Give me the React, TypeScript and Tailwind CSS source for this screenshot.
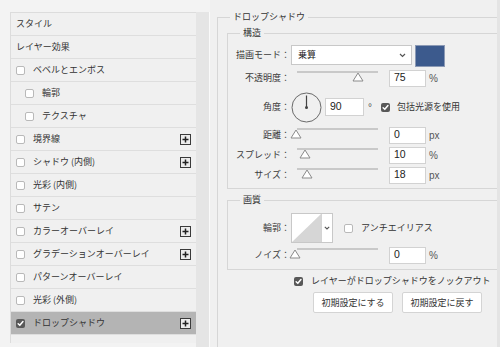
import React from "react";

const JP = "font-['Noto_Sans_CJK_JP','Noto_Sans',sans-serif]";
const NUM = "font-['Liberation_Sans','Noto_Sans_CJK_JP',sans-serif]";

function Check({ checked }: { checked?: boolean }) {
  if (checked) {
    return (
      <span className="w-[9px] h-[9px] rounded-[2px] bg-[#585858] flex items-center justify-center shrink-0">
        <svg width="7" height="7" viewBox="0 0 8 8">
          <path d="M1.3 4.2 L3.2 6.1 L6.8 1.8" stroke="white" strokeWidth="1.7" fill="none" strokeLinecap="round" strokeLinejoin="round" />
        </svg>
      </span>
    );
  }
  return <span className="block w-[9px] h-[9px] rounded-[2px] border border-[#b9b9b9] bg-white shrink-0" />;
}

function PlusBox() {
  return (
    <span className="w-[11px] h-[11px] border-[1.5px] border-[#3a3a3a] bg-[#ececec] flex items-center justify-center shrink-0">
      <svg width="7" height="7" viewBox="0 0 7 7">
        <path d="M3.5 0.5 V6.5 M0.5 3.5 H6.5" stroke="#222" strokeWidth="1.5" />
      </svg>
    </span>
  );
}

type Row = { t: string; cb?: "on" | "off"; indent?: boolean; plus?: boolean; sel?: boolean };

const rows: Row[] = [
  { t: "スタイル" },
  { t: "レイヤー効果" },
  { t: "ベベルとエンボス", cb: "off" },
  { t: "輪郭", cb: "off", indent: true },
  { t: "テクスチャ", cb: "off", indent: true },
  { t: "境界線", cb: "off", plus: true },
  { t: "シャドウ (内側)", cb: "off", plus: true },
  { t: "光彩 (内側)", cb: "off" },
  { t: "サテン", cb: "off" },
  { t: "カラーオーバーレイ", cb: "off", plus: true },
  { t: "グラデーションオーバーレイ", cb: "off", plus: true },
  { t: "パターンオーバーレイ", cb: "off" },
  { t: "光彩 (外側)", cb: "off" },
  { t: "ドロップシャドウ", cb: "on", plus: true, sel: true },
];

function Label({ children }: { children: React.ReactNode }) {
  return (
    <span className={`w-[62px] shrink-0 text-right text-[9px] text-[#3a3a3a] whitespace-nowrap ${JP}`}>{children}</span>
  );
}

function Slider({ pos }: { pos: number }) {
  return (
    <div className="relative w-[92px] h-full shrink-0">
      <div className="absolute left-[6px] top-[2px] w-[81px] h-[2px] bg-[#c9c9c9]" />
      <svg className="absolute top-[3px]" style={{ left: pos - 291 - 6 }} width="12" height="10" viewBox="0 0 12 10">
        <path d="M6 1 L11 9 L1 9 Z" fill="white" stroke="#8a8a8a" strokeWidth="1" strokeLinejoin="round" />
      </svg>
    </div>
  );
}

function NumBox({ v, w = 37, h = 17 }: { v: string; w?: number; h?: number }) {
  return (
    <span
      className={`bg-white border border-[#d2d2d2] flex items-center pl-[4px] text-[10.5px] text-[#222] shrink-0 ${NUM}`}
      style={{ width: w, height: h }}
    >
      {v}
    </span>
  );
}

function Unit({ u }: { u: string }) {
  return <span className={`ml-[3px] text-[10px] text-[#555] ${NUM}`}>{u}</span>;
}

function SliderRow({ label, pos, v, u }: { label: string; pos: number; v: string; u: string }) {
  return (
    <div className="flex items-center h-[18px]">
      <Label>{label}</Label>
      <div className="ml-[1px] h-[18px] flex items-start">
        <Slider pos={pos} />
      </div>
      <span className="ml-[6px] flex">
        <NumBox v={v} />
      </span>
      <Unit u={u} />
    </div>
  );
}

export default function App() {
  return (
    <div className={`w-[500px] h-[347px] overflow-hidden bg-[#f3f3f3] flex ${JP}`}>
      {/* left list */}
      <div className="ml-[10px] mt-[12px] w-[186px] h-[331px] border-t border-l border-[#dcdcdc] bg-[#f0f0f0] flex flex-col shrink-0">
        {rows.map((r, i) => (
          <div
            key={i}
            className={`h-[23px] shrink-0 border-b border-[#dedede] flex items-center pr-[5px] ${r.indent ? "pl-[14px]" : "pl-[5px]"} ${r.sel ? "bg-[#b4b4b4]" : ""}`}
          >
            {r.cb && <Check checked={r.cb === "on"} />}
            <span className={`text-[9px] text-[#333] ${r.cb ? "ml-[8px]" : ""}`}>{r.t}</span>
            <span className="flex-1" />
            {r.plus && <PlusBox />}
          </div>
        ))}
      </div>
      {/* strip */}
      <div className="mt-[12px] w-[13px] h-[340px] bg-[#e5e5e5] shrink-0" />
      <div className="mt-[12px] w-[1px] h-[340px] bg-[#fafafa] shrink-0" />
      {/* right panel */}
      <div className="w-[287px] h-[347px] overflow-hidden bg-[#f0f0f0] pl-[7px] pt-[11px] shrink-0">
        <fieldset className="w-[320px] h-[360px] border-t border-l border-[#d6d6d6] pl-[9px]">
          <legend className="ml-[3px] px-[3px] text-[9px] leading-[12px] text-[#333]">ドロップシャドウ</legend>

          {/* 構造 */}
          <fieldset className="mt-[4px] w-[320px] border border-[#d6d6d6] pb-[4px]">
            <legend className="ml-[12px] px-[3px] text-[9px] leading-[12px] text-[#333]">構造</legend>
            <div className="pt-[6px] flex flex-col">
              <div className="flex items-start h-[22px]">
                <div className="h-[20px] flex items-center">
                  <Label>描画モード：</Label>
                </div>
                <div className="ml-[1px] w-[121px] h-[20px] bg-white border border-[#c8c8c8] flex items-center pl-[6px] pr-[5px]">
                  <span className="text-[9px] text-[#222]">乗算</span>
                  <span className="flex-1" />
                  <svg width="7" height="5" viewBox="0 0 7 5">
                    <path d="M1 1 L3.5 3.5 L6 1" stroke="#555" strokeWidth="1.2" fill="none" />
                  </svg>
                </div>
                <div className="ml-[3px] w-[30px] h-[22px] bg-[#3c5a8d] border border-[#8c9ab5]" />
              </div>
              <div className="mt-[2px]">
                <SliderRow label="不透明度：" pos={358} v="75" u="%" />
              </div>
              <div className="mt-[4px] flex items-center h-[32px]">
                <Label>角度：</Label>
                <svg className="ml-[1px] shrink-0" width="31" height="31" viewBox="0 0 31 31">
                  <circle cx="15.5" cy="15.5" r="14.5" fill="none" stroke="#6a6a6a" strokeWidth="1" />
                  <path d="M15.5 15.5 V3.5" stroke="#444" strokeWidth="1.2" />
                  <circle cx="15.5" cy="15.5" r="1.5" fill="#444" />
                </svg>
                <span className="ml-[3px] flex">
                  <NumBox v="90" w={39} h={18} />
                </span>
                <span className={`ml-[4px] text-[10px] text-[#555] ${NUM}`}>°</span>
                <span className="ml-[9px] flex">
                  <Check checked />
                </span>
                <span className="ml-[7px] text-[9px] text-[#333]">包括光源を使用</span>
              </div>
              <div className="mt-[3px]">
                <SliderRow label="距離：" pos={296} v="0" u="px" />
              </div>
              <div className="mt-[2px]">
                <SliderRow label="スプレッド：" pos={305} v="10" u="%" />
              </div>
              <div className="mt-[2px]">
                <SliderRow label="サイズ：" pos={307} v="18" u="px" />
              </div>
            </div>
          </fieldset>

          {/* 画質 */}
          <fieldset className="mt-[5px] w-[320px] border border-[#d6d6d6] pb-[5px]">
            <legend className="ml-[12px] px-[3px] text-[9px] leading-[12px] text-[#333]">画質</legend>
            <div className="pt-[7px] flex flex-col">
              <div className="flex items-center h-[30px]">
                <Label>輪郭：</Label>
                <div className="ml-[1px] flex h-[30px] border border-[#c8c8c8] bg-white">
                  <svg width="29" height="28" viewBox="0 0 29 28">
                    <path d="M0 28 L29 0 L29 28 Z" fill="#d6d6d6" />
                  </svg>
                  <div className="w-[11px] border-l border-[#d4d4d4] flex items-center justify-center">
                    <svg width="6" height="4" viewBox="0 0 6 4">
                      <path d="M0.8 0.8 L3 3 L5.2 0.8" stroke="#555" strokeWidth="1.1" fill="none" />
                    </svg>
                  </div>
                </div>
                <span className="ml-[11px] flex">
                  <Check />
                </span>
                <span className="ml-[8px] text-[9px] text-[#333]">アンチエイリアス</span>
              </div>
              <div className="mt-[3px]">
                <SliderRow label="ノイズ：" pos={295} v="0" u="%" />
              </div>
            </div>
          </fieldset>

          <div className="mt-[4px] h-[14px] flex items-center pl-[67px]">
            <Check checked />
            <span className="ml-[8px] text-[9px] text-[#333] whitespace-nowrap">レイヤーがドロップシャドウをノックアウト</span>
          </div>
          <div className="mt-[4px] flex pl-[86px] gap-[9px]">
            <button className="w-[80px] h-[21px] bg-white border border-[#d4d4d4] rounded-[2px] text-[9px] text-[#333]">初期設定にする</button>
            <button className="w-[80px] h-[21px] bg-white border border-[#d4d4d4] rounded-[2px] text-[9px] text-[#333]">初期設定に戻す</button>
          </div>
        </fieldset>
      </div>
      <div className="w-[3px] h-[347px] bg-[#e4e4e4]" />
    </div>
  );
}
